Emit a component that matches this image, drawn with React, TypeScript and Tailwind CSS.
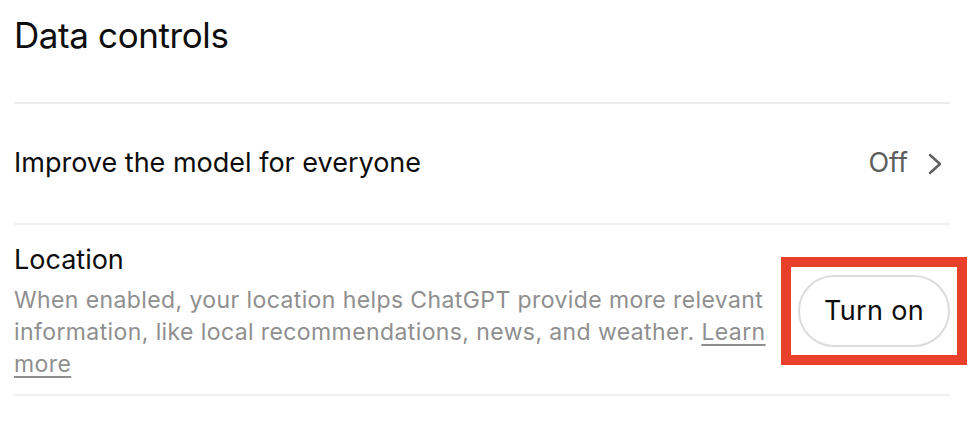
export default function App() {
  return (
    <div
      className="w-[974px] h-[424px] bg-white overflow-hidden"
      style={{ fontFamily: 'Inter, "Noto Sans", sans-serif' }}
    >
      <div className="w-[936px] ml-[14px]">
        <div className="h-[102px] pt-[13px]">
          <h1 className="text-[35px] leading-[44px] text-[#0d0d0d] tracking-[-0.4px]">Data controls</h1>
        </div>
        <div className="h-[2px] bg-[#ececec]" />
        <div className="h-[119px] flex items-center justify-between">
          <span className="text-[27px] text-[#0d0d0d]">Improve the model for everyone</span>
          <div className="flex items-center gap-[20px] mr-[8px]">
            <span className="text-[27px] text-[#5d5d5d]">Off</span>
            <svg width="14" height="22" viewBox="0 0 14 22" fill="none">
              <path d="M2 2 L12 11 L2 20" stroke="#5d5d5d" strokeWidth="2.4" strokeLinecap="round" strokeLinejoin="round" />
            </svg>
          </div>
        </div>
        <div className="h-[2px] bg-[#f0f0f0]" />
        <div className="h-[169px] flex items-start justify-between pt-[18px]">
          <div className="w-[756px]">
            <div className="text-[27px] leading-[34px] text-[#0d0d0d]">Location</div>
            <p className="text-[23px] leading-[32px] tracking-[0.4px] text-[#8f8f8f] mt-[7px]">
              When enabled, your location helps ChatGPT provide more relevant information, like local recommendations, news, and weather.{' '}
              <span className="underline underline-offset-[4px] decoration-[1.5px]">Learn more</span>
            </p>
          </div>
          <div className="mt-[14px] mr-[-17px] border-[10px] border-[#e8402a] w-[186px] h-[108px] flex items-center justify-center">
            <button className="w-[152px] h-[72px] rounded-full border-2 border-[#dcdcdc] text-[27px] tracking-[0.3px] text-[#0d0d0d] bg-white">
              Turn on
            </button>
          </div>
        </div>
        <div className="h-[2px] bg-[#f0f0f0]" />
      </div>
    </div>
  );
}
